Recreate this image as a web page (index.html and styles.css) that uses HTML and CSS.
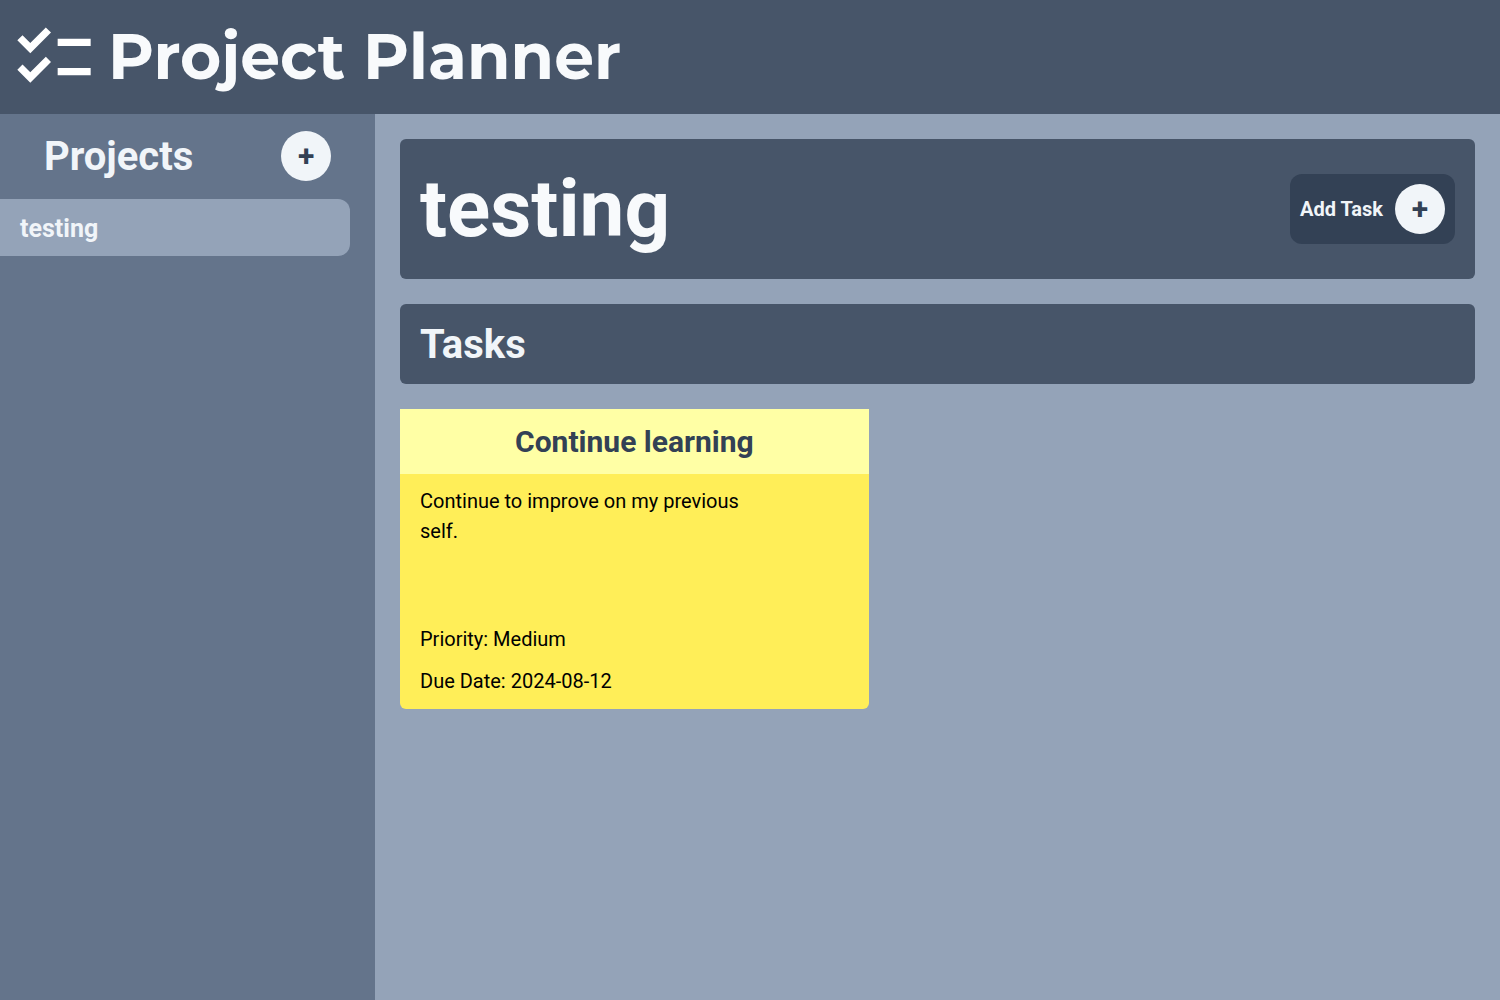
FILE: index.html
```html
<!DOCTYPE html>
<html lang="en">
<head>
<meta charset="utf-8">
<meta name="viewport" content="width=device-width, initial-scale=1">
<title>Project Planner</title>
<link rel="stylesheet" href="styles.css">
</head>
<body>
<header class="header">
  <svg class="logo" viewBox="0 0 24 24" aria-hidden="true"><path d="M22 7h-9v2h9V7zm0 8h-9v2h9v-2zM5.54 11 2 7.46l1.41-1.41 2.12 2.12 4.24-4.24 1.41 1.41L5.54 11zm0 8L2 15.46l1.41-1.41 2.12 2.12 4.24-4.24 1.41 1.41L5.54 19z"/></svg>
  <h1 class="brand">Project Planner</h1>
</header>
<div class="layout">
  <nav class="sidebar" aria-label="Projects">
    <div class="sidebar-head">
      <h2 class="section-title">Projects</h2>
      <button class="round-button" type="button" aria-label="Add project">+</button>
    </div>
    <button class="project" type="button">testing</button>
  </nav>
  <main class="content">
    <section class="panel project-panel">
      <h2 class="project-title">testing</h2>
      <div class="add-task">
        <label for="add-task">Add Task</label>
        <button class="round-button" id="add-task" type="button">+</button>
      </div>
    </section>
    <section class="panel">
      <h2 class="section-title">Tasks</h2>
    </section>
    <article class="task">
      <h3 class="task-title">Continue learning</h3>
      <div class="task-body">
        <p class="task-description">Continue to improve on my previous self.</p>
        <p>Priority: Medium</p>
        <p>Due Date: 2024-08-12</p>
      </div>
    </article>
  </main>
</div>
</body>
</html>
```
FILE: styles.css
```css
* {
  box-sizing: border-box;
  margin: 0;
}

body {
  display: flex;
  flex-direction: column;
  min-height: 100vh;
  background: #94a3b8;
  color: #f1f5f9;
  font-family: Roboto, "Liberation Sans", sans-serif;
  font-size: 20px;
  line-height: 30px;
}

button {
  border: 0;
  font: inherit;
  font-weight: 700;
  cursor: pointer;
}

.header {
  display: flex;
  align-items: center;
  gap: 10px;
  padding: 13px 10px;
  background: #475569;
  color: #f8fafc;
}

.logo {
  width: 88px;
  height: 88px;
  fill: #fff;
}

.brand {
  font-family: Montserrat, Inter, sans-serif;
  font-size: 63px;
  font-weight: 700;
  line-height: 80px;
}

.layout {
  display: flex;
  flex: 1;
}

.sidebar {
  width: 25%;
  background: #64748b;
}

.sidebar-head {
  display: flex;
  align-items: center;
  justify-content: space-around;
  padding: 17px 0 18px;
}

.section-title {
  padding-top: 2px;
  font-size: 40px;
  font-weight: 700;
  line-height: 48px;
}

.round-button {
  width: 50px;
  height: 50px;
  padding: 0;
  border-radius: 50%;
  background: #f1f5f9;
  color: #334155;
  font-size: 30px;
  line-height: 50px;
}

.project {
  display: block;
  width: calc(100% - 25px);
  padding: 13px 20px 11px;
  border-radius: 0 12px 12px 0;
  background: #94a3b8;
  color: #f1f5f9;
  font-size: 25px;
  line-height: 33px;
  text-align: left;
}

.content {
  display: flex;
  flex: 1;
  flex-direction: column;
  gap: 25px;
  padding: 25px;
}

.panel {
  padding: 15px 20px;
  border-radius: 6px;
  background: #475569;
}

.project-panel {
  display: flex;
  align-items: center;
  justify-content: space-between;
  padding: 20px;
}

.project-title {
  color: #f8fafc;
  font-size: 80px;
  line-height: 100px;
}

.add-task {
  display: flex;
  align-items: center;
  gap: 12px;
  padding: 10px;
  border-radius: 12px;
  background: #334155;
  font-weight: 700;
}

.task {
  display: flex;
  flex-direction: column;
  width: calc((100% + 50px) * 5 / 12);
  min-height: 300px;
  border-radius: 0 0 6px 6px;
  background: #ffee58;
  color: #000;
}

.task-title {
  padding: 15px 20px;
  background: #ffffa5;
  color: #334155;
  font-size: 30px;
  line-height: 35px;
  text-align: center;
}

.task-body {
  display: flex;
  flex: 1;
  flex-direction: column;
  gap: 12px;
  padding: 12px 20px 13px;
}

.task-description {
  flex: 1;
  width: 80%;
}
```
